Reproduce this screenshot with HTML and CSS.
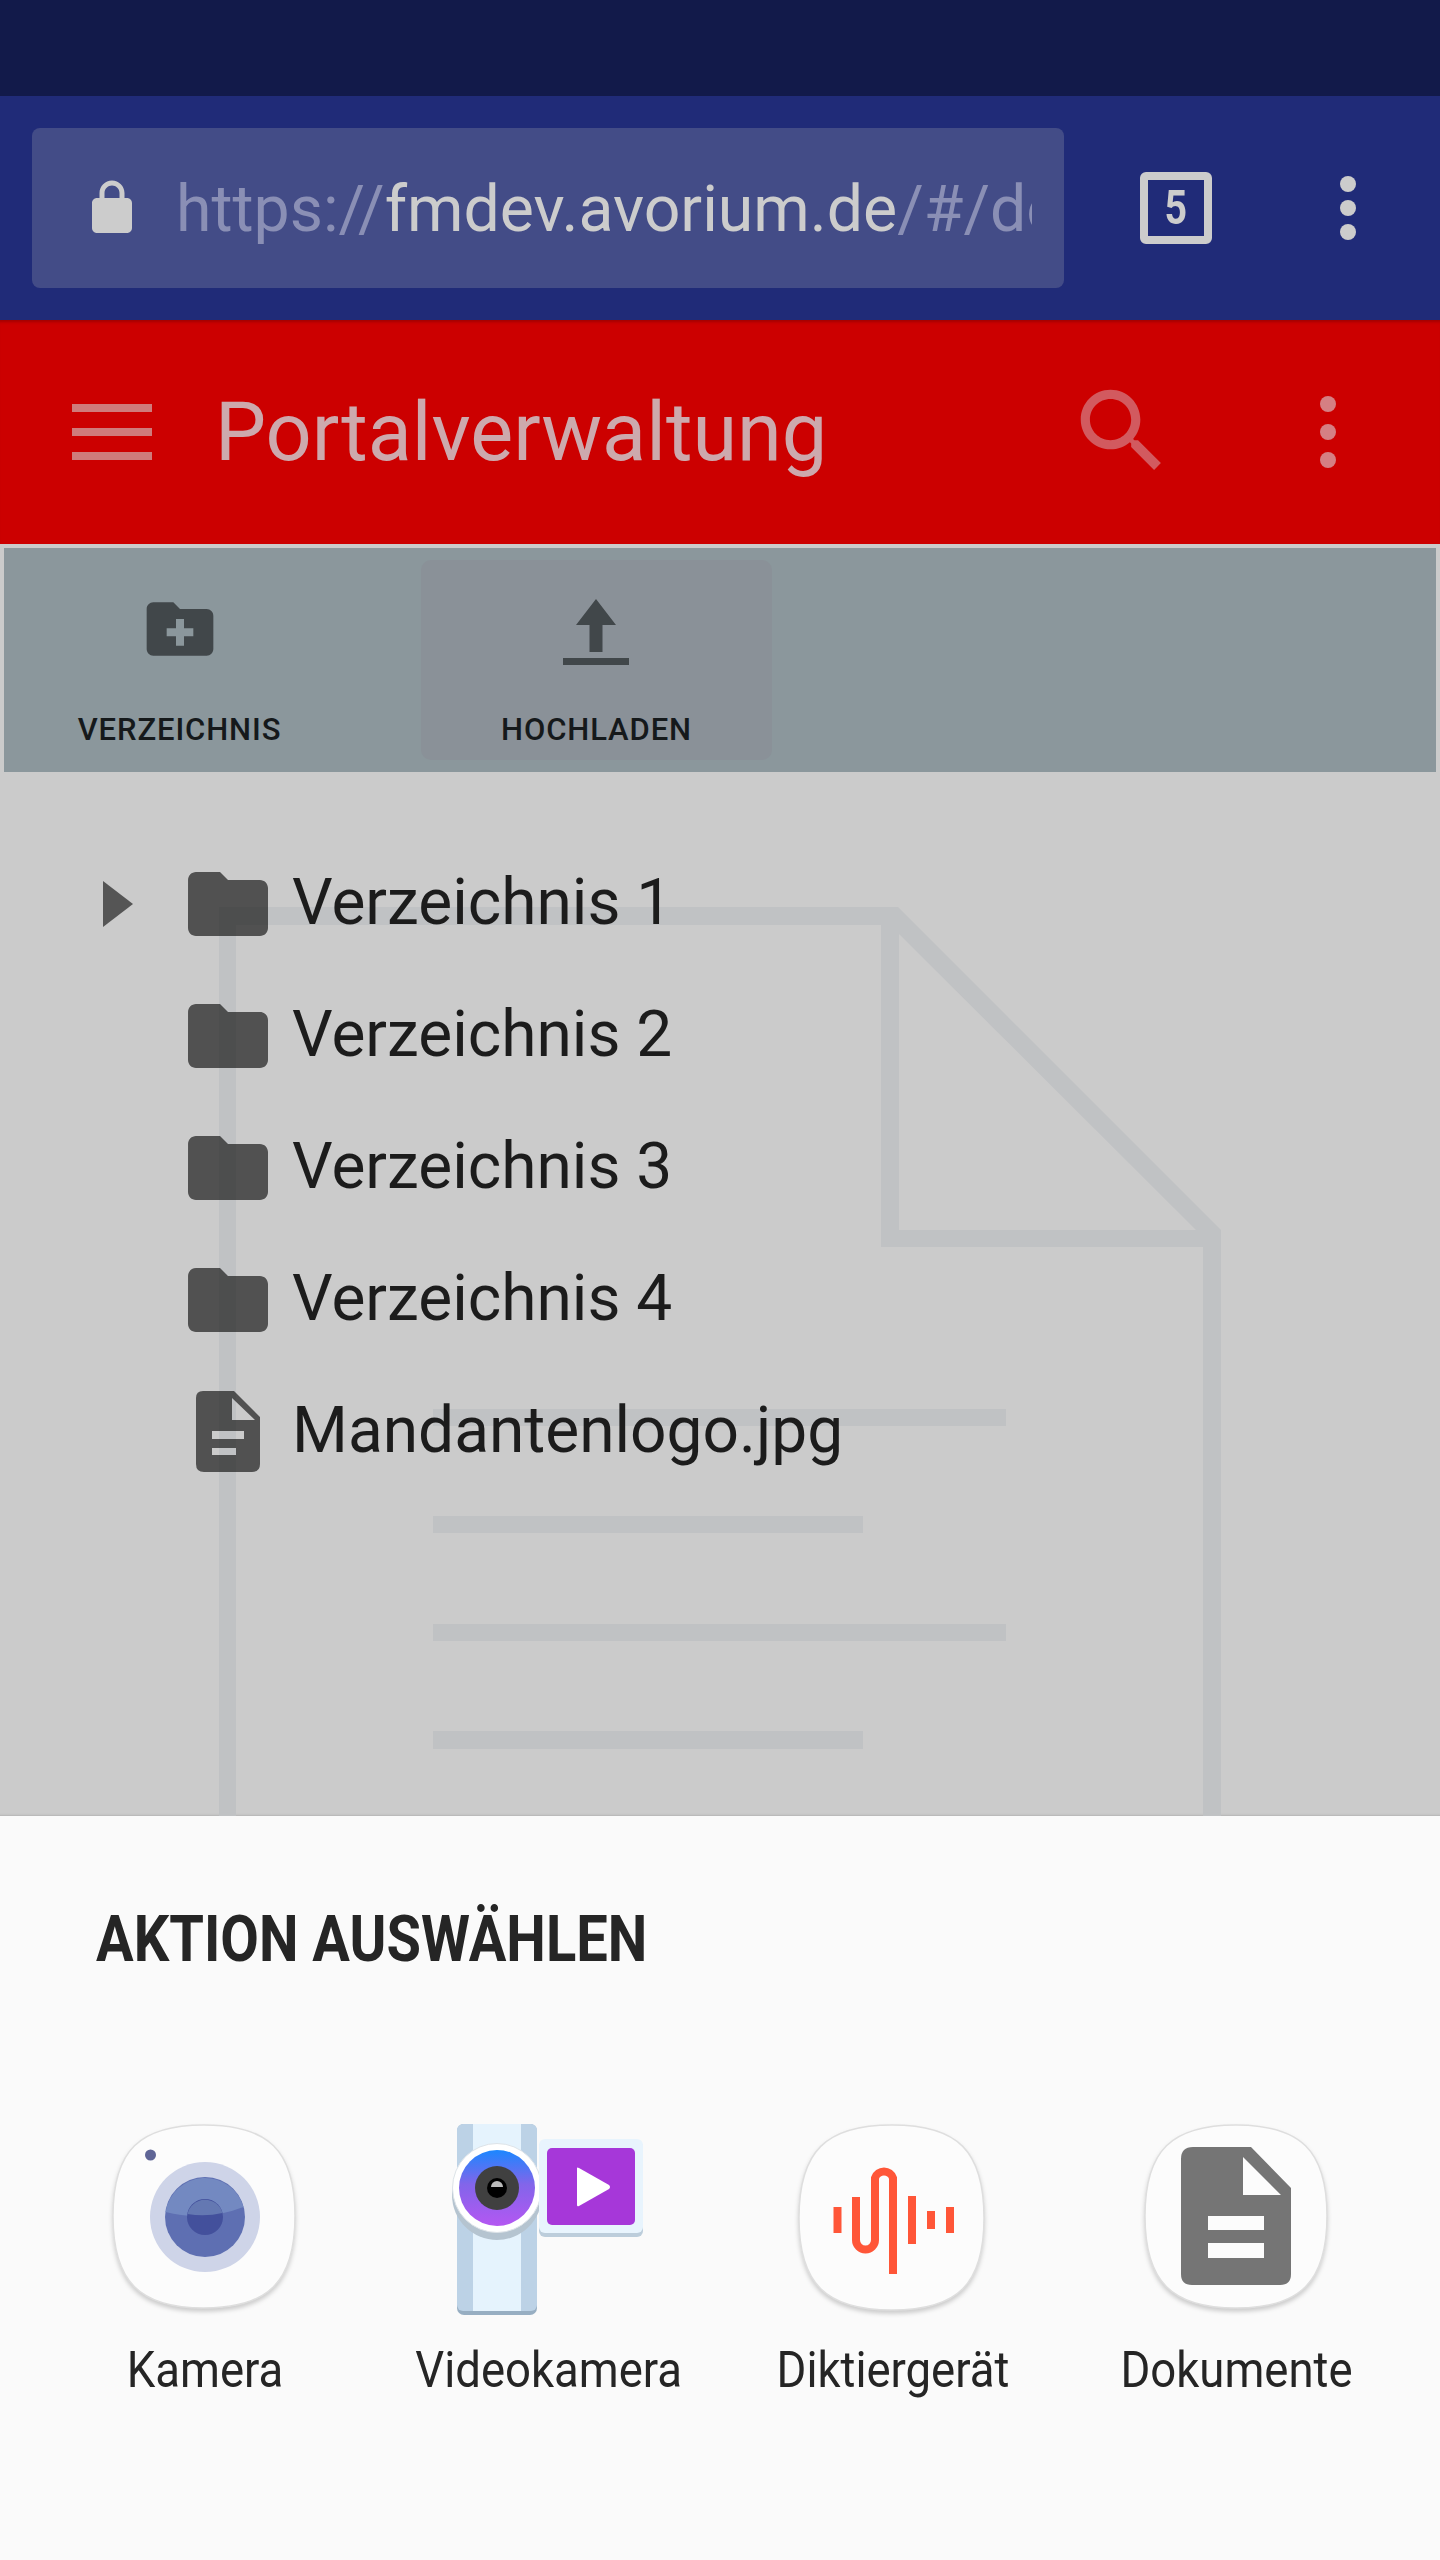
FILE: index.html
```html
<!DOCTYPE html>
<html lang="de">
<head>
<meta charset="utf-8">
<title>Portalverwaltung</title>
<link rel="stylesheet" href="styles.css">
</head>
<body>
<div class="status"></div>
<div class="browser">
  <div class="url">
    <svg class="lock" viewBox="0 0 24 24"><path fill-rule="evenodd" d="M18 8h-1V6c0-2.760-2.240-5-5-5S7 3.240 7 6v2H6c-1.100 0-2 .9-2 2v10c0 1.100.9 2 2 2h12c1.100 0 2-.9 2-2V10c0-1.100-.9-2-2-2zM15 8H9V6c0-1.660 1.340-3 3-3s3 1.340 3 3v2z"/></svg>
    <div class="url-text"><span class="dim">https://</span>fmdev.avorium.de<span class="dim">/#/do</span></div>
  </div>
  <div class="tabs"><span>5</span></div>
  <svg class="more more-browser" viewBox="0 0 16 64"><circle cx="8" cy="8" r="8"/><circle cx="8" cy="32" r="8"/><circle cx="8" cy="56" r="8"/></svg>
</div>
<header class="appbar">
  <div class="burger"><i></i><i></i><i></i></div>
  <div class="title">Portalverwaltung</div>
  <svg class="search" viewBox="0 0 24 24"><path d="M15.500 14h-.79l-.28-.27C15.410 12.590 16 11.110 16 9.500 16 5.910 13.090 3 9.500 3S3 5.910 3 9.500 5.910 16 9.500 16c1.610 0 3.090-.59 4.230-1.570l.27.28v.79l5 4.990L20.490 19l-4.990-5zm-6 0C7.010 14 5 11.990 5 9.500S7.010 5 9.500 5 14 7.010 14 9.500 11.990 14 9.500 14z"/></svg>
  <svg class="more more-app" viewBox="0 0 16 72"><circle cx="8" cy="8" r="8"/><circle cx="8" cy="36" r="8"/><circle cx="8" cy="64" r="8"/></svg>
</header>
<main class="page">
  <svg class="watermark" viewBox="0 544 1440 1272">
    <path fill="#c0c2c4" fill-rule="evenodd" d="M219 907H898L1221 1230V1816H1203V1247H881V925H236V1816H219ZM899 934V1230H1196Z"/>
    <g fill="#c0c2c4">
      <rect x="433" y="1409" width="573" height="17"/>
      <rect x="433" y="1516" width="430" height="17"/>
      <rect x="433" y="1624" width="573" height="17"/>
      <rect x="433" y="1731" width="430" height="18"/>
    </g>
  </svg>
  <div class="actions">
    <div class="action">
      <svg class="icon-new" viewBox="0 0 24 24"><path fill-rule="evenodd" d="M20 6h-8l-2-2H4c-1.100 0-2 .9-2 2v12c0 1.100.9 2 2 2h16c1.100 0 2-.9 2-2V8c0-1.100-.9-2-2-2zM16 14.200h-2.800V17h-2.400v-2.800H8v-2.400h2.800V9h2.400v2.800H16z"/></svg>
      <span class="action-label">VERZEICHNIS</span>
    </div>
    <div class="action action-hover">
      <svg class="icon-upload" viewBox="0 0 66 66"><path d="M33 0L53 26H39.500V53H26.500V26H13ZM0 59H66V66H0Z"/></svg>
      <span class="action-label">HOCHLADEN</span>
    </div>
  </div>
  <ul class="tree">
    <li class="row">
      <span class="toggle"><svg class="arrow" viewBox="0 0 30 46"><path d="M0 0L30 23L0 46Z"/></svg></span>
      <svg class="node" viewBox="0 0 24 24"><path d="M10 4H4c-1.100 0-1.990.9-1.990 2L2 18c0 1.100.9 2 2 2h16c1.100 0 2-.9 2-2V8c0-1.100-.9-2-2-2h-8l-2-2z"/></svg>
      <span class="name">Verzeichnis 1</span>
    </li>
    <li class="row">
      <span class="toggle"></span>
      <svg class="node" viewBox="0 0 24 24"><path d="M10 4H4c-1.100 0-1.990.9-1.990 2L2 18c0 1.100.9 2 2 2h16c1.100 0 2-.9 2-2V8c0-1.100-.9-2-2-2h-8l-2-2z"/></svg>
      <span class="name">Verzeichnis 2</span>
    </li>
    <li class="row">
      <span class="toggle"></span>
      <svg class="node" viewBox="0 0 24 24"><path d="M10 4H4c-1.100 0-1.990.9-1.990 2L2 18c0 1.100.9 2 2 2h16c1.100 0 2-.9 2-2V8c0-1.100-.9-2-2-2h-8l-2-2z"/></svg>
      <span class="name">Verzeichnis 3</span>
    </li>
    <li class="row">
      <span class="toggle"></span>
      <svg class="node" viewBox="0 0 24 24"><path d="M10 4H4c-1.100 0-1.990.9-1.990 2L2 18c0 1.100.9 2 2 2h16c1.100 0 2-.9 2-2V8c0-1.100-.9-2-2-2h-8l-2-2z"/></svg>
      <span class="name">Verzeichnis 4</span>
    </li>
    <li class="row">
      <span class="toggle"></span>
      <svg class="node" viewBox="180 1384 96 96"><path fill-rule="evenodd" d="M203 1391H234L260 1417V1464Q260 1472 252 1472H204Q196 1472 196 1464V1398Q196 1391 203 1391ZM232 1398V1420H255ZM212 1431V1439H244V1431ZM212 1448V1455H236V1448Z"/></svg>
      <span class="name">Mandantenlogo.jpg</span>
    </li>
  </ul>
</main>
<section class="sheet">
  <h2 class="sheet-title"><span>AKTION AUSWÄHLEN</span></h2>
  <div class="apps">
    <div class="app">
      <svg class="app-icon" viewBox="95 2120 220 200">
        <path class="squircle" d="M204 2125C268 2125 295 2150 295 2216C295 2282 268 2308 204 2308C140 2308 113 2282 113 2216C113 2150 140 2125 204 2125Z"/>
        <circle cx="150.500" cy="2155" r="5.500" fill="#5f6596"/>
        <circle cx="205" cy="2217" r="55" fill="#ced4e8"/>
        <circle cx="205" cy="2217" r="40" fill="#5e6fb2"/>
        <path d="M165.500 2212A40 40 0 0 1 243.500 2207Q205 2222 165.500 2212Z" fill="#7389c1"/>
        <circle cx="205" cy="2217" r="18" fill="#43509c"/>
        <path d="M187.500 2214A18 18 0 0 1 222.500 2213Q205 2217 187.500 2214Z" fill="#6478b2"/>
      </svg>
      <span class="app-name">Kamera</span>
    </div>
    <div class="app">
      <svg class="app-icon" viewBox="439 2120 220 200">
        <defs>
          <linearGradient id="lens" x1="0" y1="0" x2="0" y2="1">
            <stop offset="0" stop-color="#1b87ff"/>
            <stop offset=".45" stop-color="#8265ea"/>
            <stop offset="1" stop-color="#b457f2"/>
          </linearGradient>
        </defs>
        <rect x="457" y="2124" width="80" height="191" rx="7" fill="#97aec2"/>
        <rect x="457" y="2124" width="80" height="187" rx="6" fill="#bcd2e6"/>
        <rect x="473" y="2124" width="48" height="187" fill="#e5f3fd"/>
        <circle cx="497" cy="2195" r="45" fill="#b5c4d0"/>
        <circle cx="497" cy="2188" r="44.500" fill="#fff" stroke="#dde3e8"/>
        <circle cx="497" cy="2188" r="38" fill="url(#lens)"/>
        <circle cx="497" cy="2188" r="22" fill="#404040"/>
        <circle cx="497" cy="2188" r="10" fill="#000"/>
        <path d="M491 2187A6 6 0 0 1 503 2187Z" fill="#bbb"/>
        <rect x="539" y="2141" width="104" height="96" rx="6" fill="#bccddb"/>
        <rect x="539" y="2139" width="104" height="94" rx="6" fill="#e8f4fd"/>
        <rect x="547" y="2148" width="88" height="77" rx="5" fill="#a637d9"/>
        <path d="M577 2168Q577 2167 579 2168L609 2185Q611 2187 609 2189L579 2206Q577 2207 577 2205Z" fill="#fff"/>
      </svg>
      <span class="app-name">Videokamera</span>
    </div>
    <div class="app">
      <svg class="app-icon" viewBox="783 2120 220 200">
        <path class="squircle" d="M892 2125C958 2125 984 2151 984 2218C984 2284 958 2310 892 2310C826 2310 799 2284 799 2218C799 2151 826 2125 892 2125Z"/>
        <g fill="none" stroke="#ff5638" stroke-width="8">
          <path d="M837.500 2207V2233"/>
          <path d="M856 2197V2240A9.500 9.500 0 0 0 875 2240V2178A9.500 9.500 0 0 1 893 2178V2274"/>
          <path d="M912 2196V2244"/>
          <path d="M931 2211V2229"/>
          <path d="M950 2207V2233"/>
        </g>
      </svg>
      <span class="app-name">Diktiergerät</span>
    </div>
    <div class="app">
      <svg class="app-icon" viewBox="1127 2120 220 200">
        <path class="squircle" d="M1236 2125C1300 2125 1327 2150 1327 2216C1327 2282 1300 2308 1236 2308C1172 2308 1145 2282 1145 2216C1145 2150 1172 2125 1236 2125Z"/>
        <path fill-rule="evenodd" fill="#757575" d="M1193 2147H1251L1291 2188V2274Q1291 2285 1280 2285H1192Q1181 2285 1181 2274V2159Q1181 2147 1193 2147ZM1243 2157V2195H1281ZM1208 2216V2230H1264V2216ZM1208 2243V2258H1264V2243Z"/>
      </svg>
      <span class="app-name">Dokumente</span>
    </div>
  </div>
</section>
</body>
</html>
```

FILE: styles.css
```css
* { box-sizing: border-box; }
html, body { margin: 0; padding: 0; }
body {
  width: 1440px;
  height: 2560px;
  overflow: hidden;
  font-family: Roboto, "Liberation Sans", sans-serif;
  background: #cbcbcb;
}
.status { height: 96px; background: #121a4a; }
.browser {
  height: 224px;
  background: #202b78;
  display: flex;
  align-items: center;
  padding-left: 32px;
}
.url {
  width: 1032px;
  height: 160px;
  border-radius: 8px;
  background: #434c87;
  display: flex;
  align-items: center;
  padding: 0 32px 0 50px;
  overflow: hidden;
}
.lock { width: 60px; height: 60px; flex: none; fill: #cccccc; margin-right: 34px; }
.url-text {
  flex: 1;
  overflow: hidden;
  white-space: nowrap;
  font-size: 64.4px;
  line-height: 84px;
  padding-top: 2px;
  color: #cccccc;
}
.dim { color: #8a8fb5; }
.tabs {
  width: 72px;
  height: 72px;
  margin-left: 76px;
  border: 8px solid #cccccc;
  border-radius: 6px;
  color: #cccccc;
  font-size: 48px;
  font-weight: 700;
  line-height: 56px;
  text-align: center;
}
.tabs span { display: inline-block; transform: scaleX(.82); }
.more { flex: none; }
.more-browser { width: 16px; height: 64px; margin-left: 128px; fill: #cccccc; }
.appbar {
  height: 224px;
  background: #cc0000;
  box-shadow: inset 0 4px 3px -2px #a30000;
  display: flex;
  align-items: center;
}
.burger {
  width: 80px;
  height: 56px;
  margin-left: 72px;
  display: flex;
  flex-direction: column;
  justify-content: space-between;
  flex: none;
}
.burger i { display: block; height: 8px; background: #cf7b7b; }
.title {
  margin-left: 63px;
  padding-top: 2px;
  font-size: 81px;
  line-height: 100px;
  color: #cda9ad;
  width: 852px;
  white-space: nowrap;
}
.search { width: 110px; height: 110px; fill: #d25a5f; flex: none; margin-top: -2px; }
.more-app { width: 16px; height: 72px; margin-left: 143px; fill: #d57f83; }
.page {
  position: relative;
  height: 1272px;
  padding-top: 4px;
  background: #cbcbcb;
  box-shadow: inset 0 -3px 2px -2px #b5b5b5;
  overflow: hidden;
}
.watermark { position: absolute; left: 0; top: 0; width: 1440px; height: 1272px; }
.actions {
  position: relative;
  height: 224px;
  margin: 0 4px;
  padding: 12px 0;
  background: #8b979c;
  display: flex;
  gap: 66px;
}
.action {
  width: 351px;
  height: 200px;
  border-radius: 10px;
  position: relative;
}
.action-hover { background: #8a9198; }
.icon-new { position: absolute; left: 136px; top: 29px; width: 80px; height: 80px; fill: #41474a; }
.icon-upload { position: absolute; left: 142px; top: 39px; width: 66px; height: 66px; fill: #41474a; }
.action-label {
  position: absolute;
  left: 0;
  right: 0;
  top: 152px;
  text-align: center;
  font-size: 31px;
  line-height: 36px;
  font-weight: 500;
  letter-spacing: .9px;
  color: #15191b;
}
.tree { position: relative; list-style: none; margin: 0; padding: 66px 0 0 100px; }
.row { height: 132px; display: flex; align-items: center; }
.toggle { width: 80px; height: 46px; flex: none; }
.arrow { display: block; width: 30px; height: 46px; margin-left: 3px; fill: #555555; }
.node { width: 96px; height: 96px; flex: none; fill: rgba(0, 0, 0, .6); }
.name { margin: -2px 0 0 16px; font-size: 64px; line-height: 80px; color: #1c1c1c; white-space: nowrap; }
.sheet { height: 744px; background: #fafafa; }
.sheet-title {
  margin: 0;
  padding: 84px 0 0 96px;
  font-size: 64px;
  line-height: 80px;
  font-weight: 700;
  color: #252525;
  white-space: nowrap;
}
.sheet-title span { display: inline-block; transform: scaleX(.875); transform-origin: left center; }
.apps {
  display: grid;
  grid-template-columns: repeat(4, 344px);
  padding: 140px 0 0 33px;
}
.app { display: flex; flex-direction: column; align-items: center; }
.app-icon { width: 220px; height: 200px; display: block; }
.squircle { fill: #fcfcfc; stroke: #dedede; stroke-width: 1.500; filter: drop-shadow(0 3px 2px rgba(0,0,0,.18)); }
.app-name {
  margin-top: 18px;
  font-size: 50px;
  line-height: 64px;
  color: #252525;
  white-space: nowrap;
  transform: scaleX(.91);
}
```
